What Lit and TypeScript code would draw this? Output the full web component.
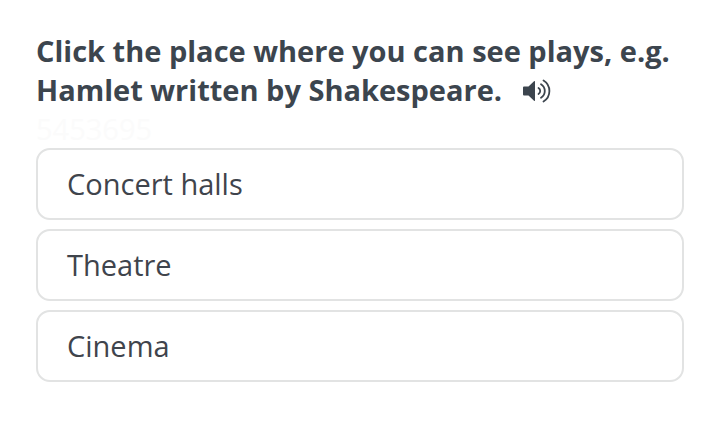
import { LitElement, html, css } from "lit";
import { customElement, state } from "lit/decorators.js";

@customElement("app-root")
export class AppRoot extends LitElement {
  static styles = css`
    :host {
      display: block;
      padding: 31px 36px;
      color: #3f444c;
      background: #fff;
      font-family: "Open Sans", "Noto Sans", sans-serif;
    }
    .question {
      margin: 0;
      color: #3c454e;
      font-size: 29px;
      line-height: 39px;
      font-weight: 700;
    }
    .audio {
      display: inline-block;
      margin: 0 0 0 13px;
      padding: 0;
      border: 0;
      background: none;
      color: inherit;
      line-height: 0;
      vertical-align: middle;
    }
    .audio svg {
      display: block;
      width: 28px;
      height: 30px;
    }
    .code {
      margin: 0;
      font-size: 29px;
      line-height: 39px;
      color: #fbfbfb;
    }
    .answers {
      display: grid;
      gap: 9px;
    }
    .answer {
      box-sizing: border-box;
      padding: 14px 29px;
      border: 2px solid #e2e3e3;
      border-radius: 14px;
      background: #fff;
      color: inherit;
      font-family: inherit;
      font-size: 29px;
      line-height: 40px;
      text-align: left;
    }
  `;

  @state() private answers = ["Concert halls", "Theatre", "Cinema"];

  render() {
    return html`
      <h1 class="question">
        Click the place where you can see plays, e.g. Hamlet written by Shakespeare.
        <button class="audio" aria-label="Listen">
          <svg viewBox="0 0 28 30" fill="none" stroke="currentColor" stroke-width="1.8" stroke-linecap="round">
            <path d="M1 8.5h4.5L11 3.3q1-.8 1 .4v18.600q0 1.200-1 .4L5.500 17.500H1q-1 0-1-1v-7q0-1 1-1z" fill="currentColor" stroke="none" />
            <path d="M15.500 10a3.500 3.500 0 0 1 0 6M18 6.200a8 8 0 0 1 0 13.600M20.500 2.500a12.300 12.300 0 0 1 0 21" />
          </svg>
        </button>
      </h1>
      <p class="code">5453695</p>
      <div class="answers">
        ${this.answers.map((a) => html`<button class="answer">${a}</button>`)}
      </div>
    `;
  }
}
